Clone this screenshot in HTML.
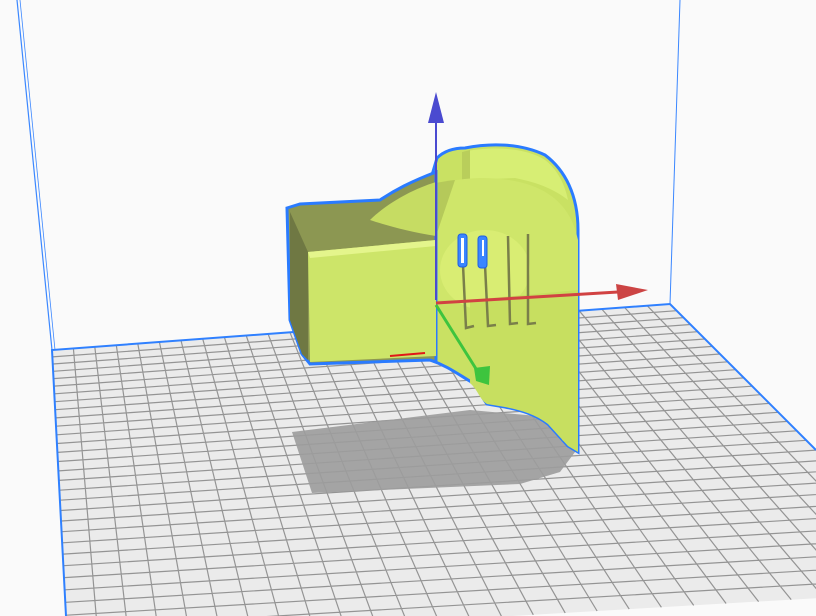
<!DOCTYPE html>
<html><head><meta charset="utf-8"><style>
html,body{margin:0;padding:0;background:#fafafa;width:816px;height:616px;overflow:hidden}
svg{display:block}
</style></head><body>
<svg id="s" width="816" height="616" viewBox="0 0 816 616" xmlns="http://www.w3.org/2000/svg">
<rect width="816" height="616" fill="#fafafa"/>
<line x1="17" y1="0" x2="52" y2="350" stroke="#3b87ff" stroke-width="1.2"/>
<line x1="20" y1="0" x2="55" y2="350" stroke="#3b87ff" stroke-width="0.8"/>
<line x1="680" y1="0" x2="670" y2="304" stroke="#3b87ff" stroke-width="1"/>
<polygon points="52,350 670,304 956,590 68,642" fill="#ebebeb"/>
<g id="grid" stroke="#949494" stroke-width="1.2" fill="none"></g>
<polyline points="66,616 52,350 670,304 816,450" fill="none" stroke="#2f80ff" stroke-width="2"/>
<polygon points="292,432 470,410 560,418 578,448 560,472 520,484 312,493" fill="#9c9c9c" opacity="0.9"/>
<!-- tall body -->
<path d="M432,175 L437,158 C445,150 455,148 465,148 C490,143 520,143 545,155 C565,170 578,195 578,230 L578,452 L568,446 L548,424 C535,414 520,410 505,407 L487,404 C480,395 478,385 468,380 C455,372 445,365 430,360 Z" fill="#c9e163" stroke="#2a7bff" stroke-width="3"/>
<path d="M560,215 C570,230 576,240 576,260 L576,450 L562,440 Z" fill="#a8bd4f"/>
<path d="M462,152 C490,146 525,147 545,160 C558,170 565,185 568,200 C555,190 540,183 515,178 L470,180 Z" fill="#d7ee74"/>
<path d="M462,152 L470,150 L470,180 L462,182 Z" fill="#b9ce5b"/>
<path d="M370,220 C390,195 430,180 480,178 C540,178 570,200 578,240 L578,300 L436,300 L436,240 Z" fill="#cfe66a"/>
<path d="M370,220 C390,195 420,184 455,180 L436,236 Z" fill="#b5c95a"/>
<ellipse cx="485" cy="270" rx="45" ry="40" fill="#e0f27a" opacity="0.6"/>
<path d="M470,300 L470,383 C478,390 480,400 487,404 L505,407 C520,410 535,414 548,424 L568,446 L578,452 L578,290 Z" fill="#c7df60"/>
<g stroke="#7a7f4a" stroke-width="2.5" fill="none">
<path d="M463,265 L466,328 L474,326"/>
<path d="M485,265 L488,326 L496,325"/>
<path d="M508,236 L510,324 L518,323"/>
<path d="M528,234 L528,324 L536,323"/>
</g>
<rect x="458" y="234" width="9" height="33" rx="3" fill="#3a86ff" stroke="#1f5fe0"/>
<rect x="461" y="238" width="3" height="25" fill="#ffffff"/>
<rect x="478" y="236" width="9" height="32" rx="3" fill="#3a86ff" stroke="#1f5fe0"/>
<rect x="482" y="240" width="2" height="16" fill="#ffffff"/>
<!-- box -->
<path d="M287,208 L300,204 L380,200 C395,190 410,182 436,172 L436,362 L430,360 L310,364 L302,354 L290,320 Z" fill="#8c9752" stroke="#2a7bff" stroke-width="3"/>
<path d="M370,220 C385,205 410,190 436,182 L436,236 C410,232 385,225 370,220 Z" fill="#c6dc63"/>
<path d="M290,212 L308,252 L308,360 L302,354 L290,320 Z" fill="#6f7843"/>
<path d="M308,252 L436,240 L436,356 L310,362 Z" fill="#cde569"/>
<path d="M308,252 L436,240 L436,246 L310,258 Z" fill="#e4f58c"/>
<line x1="390" y1="356" x2="425" y2="353" stroke="#e01818" stroke-width="2"/>
<line x1="436" y1="300" x2="436" y2="120" stroke="#4a4ad0" stroke-width="2"/>
<polygon points="436,92 428,123 444,123" fill="#4a4ad0"/>
<line x1="436" y1="303" x2="618" y2="292" stroke="#d14242" stroke-width="3"/>
<polygon points="648,290 616,284 618,300" fill="#cc4444"/>
<line x1="436" y1="305" x2="478" y2="372" stroke="#3ec43e" stroke-width="3"/>
<polygon points="474,368 490,366 489,385 476,381" fill="#3ec43e"/>
</svg>
<script>
(function(){
function H(src,dst){var A=[],b=[];for(var i=0;i<4;i++){var x=src[i][0],y=src[i][1],u=dst[i][0],v=dst[i][1];A.push([x,y,1,0,0,0,-u*x,-u*y]);b.push(u);A.push([0,0,0,x,y,1,-v*x,-v*y]);b.push(v);}
var n=8;for(var c=0;c<n;c++){var p=c;for(var r=c+1;r<n;r++)if(Math.abs(A[r][c])>Math.abs(A[p][c]))p=r;var t=A[c];A[c]=A[p];A[p]=t;t=b[c];b[c]=b[p];b[p]=t;for(var r=0;r<n;r++){if(r==c)continue;var f=A[r][c]/A[c][c];for(var k=c;k<n;k++)A[r][k]-=f*A[c][k];b[r]-=f*b[c];}}
var h=[];for(var i=0;i<n;i++)h.push(b[i]/A[i][i]);h.push(1);return h;}
var h=H([[0,0],[1,0],[1,1],[0,1]],[[52,350],[670,304],[956,590],[68,642]]);
function P(x,y){var w=h[6]*x+h[7]*y+1;return [(h[0]*x+h[1]*y+h[2])/w,(h[3]*x+h[4]*y+h[5])/w];}
var g=document.getElementById('grid'),NS='http://www.w3.org/2000/svg',C=28,R=30,d='';
for(var i=1;i<C;i++){var a=P(i/C,0),e=P(i/C,1);d+='M'+a[0].toFixed(1)+','+a[1].toFixed(1)+'L'+e[0].toFixed(1)+','+e[1].toFixed(1);}
for(var j=1;j<R;j++){var a=P(0,j/R),e=P(1,j/R);d+='M'+a[0].toFixed(1)+','+a[1].toFixed(1)+'L'+e[0].toFixed(1)+','+e[1].toFixed(1);}
var p=document.createElementNS(NS,'path');p.setAttribute('d',d);g.appendChild(p);
})();
</script>
</body></html>
